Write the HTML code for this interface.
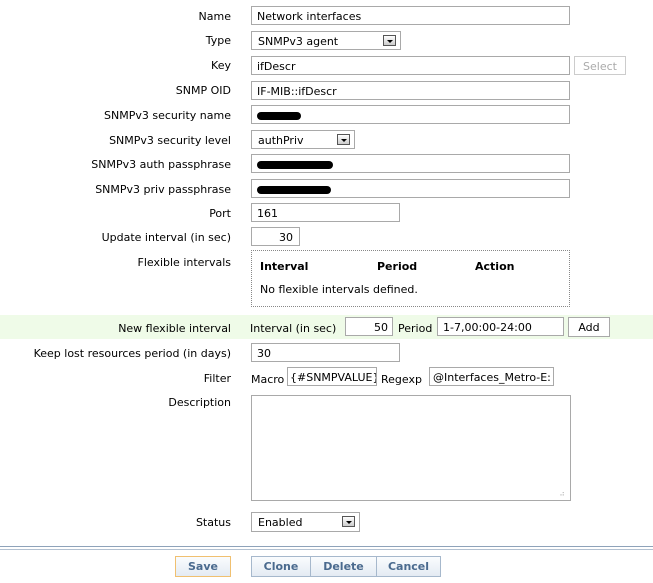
<!DOCTYPE html>
<html><head><style>
body{margin:0;width:653px;height:583px;background:#fff;position:relative;overflow:hidden;font-family:"DejaVu Sans","Liberation Sans",sans-serif;font-size:11px;color:#000}
.a{position:absolute;white-space:nowrap;margin-top:1px}
.l{position:absolute;right:422px;white-space:nowrap;line-height:12px;margin-top:1px}
.i{position:absolute;border:1px solid #a9a9a9;background:#fff;box-sizing:border-box;height:19px;line-height:19px;padding-left:5px;white-space:nowrap;overflow:hidden}
.s{position:absolute;border:1px solid #a9a9a9;background:#fff;box-sizing:border-box;height:19px;line-height:19px;padding-left:6px}
.s b{position:absolute;right:4px;top:3px;width:13px;height:11px;border:1px solid #555;background:linear-gradient(#fff,#ccc);box-sizing:border-box}
.s b:after{content:"";position:absolute;left:3px;top:4px;border-left:3px solid transparent;border-right:3px solid transparent;border-top:3px solid #000}
.blob{display:inline-block;height:8px;background:#000;border-radius:4px;vertical-align:middle}
.btn{position:absolute;box-sizing:border-box;height:21px;line-height:20px;text-align:center;font-weight:bold;color:#4a6a8e;background:linear-gradient(#fafcfe,#e4ebf3);border:1px solid #a6b8cc}
</style></head><body>
<div class="l" style="top:10px">Name</div><div class="i" style="left:251px;top:6px;width:319px">Network interfaces</div>
<div class="l" style="top:34px">Type</div><div class="s" style="left:251px;top:31px;width:150px">SNMPv3 agent<b></b></div>
<div class="l" style="top:59px">Key</div><div class="i" style="left:251px;top:56px;width:319px">ifDescr</div>
<div class="i" style="left:574px;top:56px;width:52px;color:#aaa;border-color:#ccc;padding:0;text-align:center">Select</div>
<div class="l" style="top:84px">SNMP OID</div><div class="i" style="left:251px;top:81px;width:319px">IF-MIB::ifDescr</div>
<div class="l" style="top:109px">SNMPv3 security name</div><div class="i" style="left:251px;top:105px;width:319px"><span class="blob" style="width:44px"></span></div>
<div class="l" style="top:134px">SNMPv3 security level</div><div class="s" style="left:251px;top:130px;width:104px">authPriv<b></b></div>
<div class="l" style="top:158px">SNMPv3 auth passphrase</div><div class="i" style="left:251px;top:154px;width:319px"><span class="blob" style="width:76px"></span></div>
<div class="l" style="top:183px">SNMPv3 priv passphrase</div><div class="i" style="left:251px;top:179px;width:319px"><span class="blob" style="width:74px"></span></div>
<div class="l" style="top:207px">Port</div><div class="i" style="left:251px;top:203px;width:149px">161</div>
<div class="l" style="top:231px">Update interval (in sec)</div><div class="i" style="left:251px;top:227px;width:49px;text-align:right;padding-right:6px">30</div>
<div class="l" style="top:256px">Flexible intervals</div>
<div class="a" style="left:251px;top:250px;width:319px;height:57px;border:1px dotted #888;box-sizing:border-box;margin:0"></div>
<div class="a" style="left:260px;top:259px;font-weight:bold">Interval</div>
<div class="a" style="left:377px;top:259px;font-weight:bold">Period</div>
<div class="a" style="left:475px;top:259px;font-weight:bold">Action</div>
<div class="a" style="left:260px;top:282px">No flexible intervals defined.</div>
<div class="a" style="left:0;top:315px;width:653px;height:24px;background:#effbe8;margin:0"></div>
<div class="l" style="top:322px">New flexible interval</div>
<div class="a" style="left:250px;top:321px">Interval (in sec)</div>
<div class="i" style="left:345px;top:317px;width:48px;text-align:right;padding-right:4px">50</div>
<div class="a" style="left:398px;top:321px">Period</div>
<div class="i" style="left:437px;top:317px;width:127px">1-7,00:00-24:00</div>
<div class="i" style="left:568px;top:317px;width:42px;padding:0;text-align:center;height:20px">Add</div>
<div class="l" style="top:347px">Keep lost resources period (in days)</div><div class="i" style="left:251px;top:343px;width:149px">30</div>
<div class="l" style="top:372px">Filter</div>
<div class="a" style="left:251px;top:372px">Macro</div>
<div class="i" style="left:287px;top:367px;width:90px;padding-left:2px">{#SNMPVALUE}</div>
<div class="a" style="left:381px;top:372px">Regexp</div>
<div class="i" style="left:429px;top:367px;width:125px;padding-left:3px">@Interfaces_Metro-E:</div>
<div class="l" style="top:396px">Description</div>
<div class="a" style="left:251px;top:395px;width:320px;height:106px;border:1px solid #a9a9a9;box-sizing:border-box;margin:0"><span style="position:absolute;right:5px;bottom:2px;color:#bbb;font-size:8px">⠴</span></div>
<div class="l" style="top:516px">Status</div><div class="s" style="left:251px;top:512px;width:109px;height:20px">Enabled<b></b></div>
<div class="a" style="left:0;top:546px;width:653px;height:1px;background:#8fa3ba;margin:0"></div>
<div class="a" style="left:0;top:549px;width:653px;height:1px;background:#b3c1d1;margin:0"></div>
<div class="btn" style="left:175px;top:556px;width:56px;border-color:#f0c070">Save</div>
<div class="btn" style="left:251px;top:556px;width:60px">Clone</div>
<div class="btn" style="left:310px;top:556px;width:67px">Delete</div>
<div class="btn" style="left:376px;top:556px;width:65px">Cancel</div>
</body></html>
